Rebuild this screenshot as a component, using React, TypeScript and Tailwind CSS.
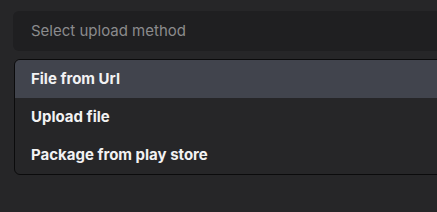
import React, { useState } from 'react';

const options = ['File from Url', 'Upload file', 'Package from play store'];

export default function App() {
  const [active, setActive] = useState(0);

  return (
    <div className="w-[437px] h-[212px] bg-[#262628] pt-[11px] pl-[13px] overflow-hidden" style={{ fontFamily: 'Inter, "Noto Sans", sans-serif' }}>
      <div className="w-[440px] h-[40px] rounded-md bg-[#1f1f21] flex items-center pl-[18px] text-[15px] text-[#8b8b8d]">
        Select upload method
      </div>
      <div className="mt-[8px] ml-[1px] w-[440px] rounded-md border border-[#0b0b0c] bg-[#262628] overflow-hidden">
        {options.map((opt, i) => (
          <div
            key={opt}
            onMouseEnter={() => setActive(i)}
            className={
              'h-[38px] flex items-center pl-[16px] text-[15px] font-bold text-[#f2f2f3] ' +
              (i === active ? 'bg-[#41444d]' : '')
            }
          >
            {opt}
          </div>
        ))}
      </div>
    </div>
  );
}
